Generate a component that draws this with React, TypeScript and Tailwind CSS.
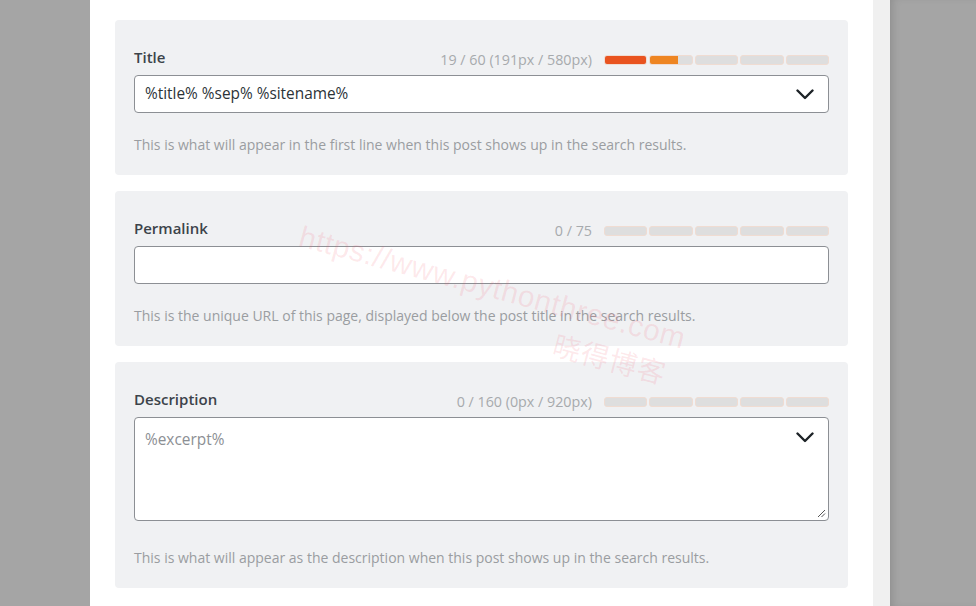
import React from "react";

const font = { fontFamily: '"Open Sans", "Noto Sans", Arial, sans-serif' };

function Chevron() {
  return (
    <svg width="18" height="11" viewBox="0 0 18 11" fill="none">
      <path d="M1.5 1.5 L9 9 L16.5 1.5" stroke="#1d2327" strokeWidth="2.4" strokeLinecap="round" strokeLinejoin="round" />
    </svg>
  );
}

// five segments; fills are percentages per segment
function Meter({ fills }: { fills: { w: number; color: string }[] }) {
  return (
    <div className="flex h-[10px] w-[225px] gap-[2px]">
      {fills.map((f, i) => (
        <div
          key={i}
          className="relative flex-1 overflow-hidden rounded-[3px] border border-[#f0dcd2] bg-[#dedede]"
        >
          <div className="absolute inset-y-0 left-0" style={{ width: f.w + "%", background: f.color }} />
        </div>
      ))}
    </div>
  );
}

const empty = Array.from({ length: 5 }, () => ({ w: 0, color: "transparent" }));

function Card({
  label,
  counter,
  fills,
  help,
  children,
}: {
  label: string;
  counter: string;
  fills: { w: number; color: string }[];
  help: string;
  children: React.ReactNode;
}) {
  return (
    <div className="rounded-[4px] bg-[#f0f1f3] px-[19px] pb-[20px] pt-[27px]">
      <div className="flex h-[20px] items-start justify-between">
        <span className="text-[15px] font-semibold leading-[20px] text-[#3c434a]">{label}</span>
        <div className="mt-[3px] flex h-[20px] items-center gap-[12px]">
          <span className="text-[14.3px] text-[#a7aaad]">{counter}</span>
          <Meter fills={fills} />
        </div>
      </div>
      <div className="mt-[8px]">{children}</div>
      <p className="mt-[22px] text-[14px] leading-[20px] text-[#9a9da1]">{help}</p>
    </div>
  );
}

export default function App() {
  return (
    <div className="relative flex h-[606px] w-[976px] overflow-hidden bg-[#a4a4a4]" style={font}>
      <div className="w-[90px] bg-[#a5a5a5]" />
      <div className="flex w-[783px] flex-col gap-[16px] bg-white px-[25px] pt-[20px]">
        <Card
          label="Title"
          counter="19 / 60 (191px / 580px)"
          fills={[
            { w: 100, color: "#e9531f" },
            { w: 66, color: "#ee8522" },
            { w: 0, color: "transparent" },
            { w: 0, color: "transparent" },
            { w: 0, color: "transparent" },
          ]}
          help="This is what will appear in the first line when this post shows up in the search results."
        >
          <div className="flex h-[38px] items-center justify-between rounded-[4px] border border-[#8c8f94] bg-white pl-[10px] pr-[14px]">
            <span className="text-[15.4px] text-[#2c3338]">%title% %sep% %sitename%</span>
            <Chevron />
          </div>
        </Card>
        <Card
          label="Permalink"
          counter="0 / 75"
          fills={empty}
          help="This is the unique URL of this page, displayed below the post title in the search results."
        >
          <div className="h-[38px] rounded-[4px] border border-[#8c8f94] bg-white" />
        </Card>
        <Card
          label="Description"
          counter="0 / 160 (0px / 920px)"
          fills={empty}
          help="This is what will appear as the description when this post shows up in the search results."
        >
          <div className="pb-[5px]">
            <div className="relative h-[104px] rounded-[4px] border border-[#8c8f94] bg-white pl-[10px] pr-[14px] pt-[10px]">
              <div className="flex items-start justify-between">
                <span className="text-[15.4px] text-[#8c8f94]">%excerpt%</span>
                <div className="pt-[4px]">
                  <Chevron />
                </div>
              </div>
              <svg className="absolute bottom-[2px] right-[2px]" width="9" height="9" viewBox="0 0 9 9">
                <path d="M8 1 L1 8 M8 4.5 L4.5 8" stroke="#555" strokeWidth="1" />
              </svg>
            </div>
          </div>
        </Card>
      </div>
      <div className="w-[17px] bg-[#f0f0f0]" />
      <div className="flex-1 bg-[#a5a5a5] shadow-[inset_6px_0_8px_-4px_rgba(0,0,0,0.15)]" />

      <div
        className="pointer-events-none absolute left-[300px] top-[213px] origin-left rotate-[15deg] whitespace-nowrap text-[30px] tracking-[0.5px] text-[rgba(240,80,100,0.13)]"
        style={{ fontFamily: '"Liberation Sans", Arial, sans-serif' }}
      >
        https://www.pythonthree.com
      </div>
      <div
        className="pointer-events-none absolute left-[554px] top-[322px] origin-left rotate-[15deg] whitespace-nowrap text-[28px] tracking-[1px] text-[rgba(240,80,100,0.13)]"
        style={{ fontFamily: '"Noto Sans CJK SC", sans-serif' }}
      >
        晓得博客
      </div>
    </div>
  );
}
